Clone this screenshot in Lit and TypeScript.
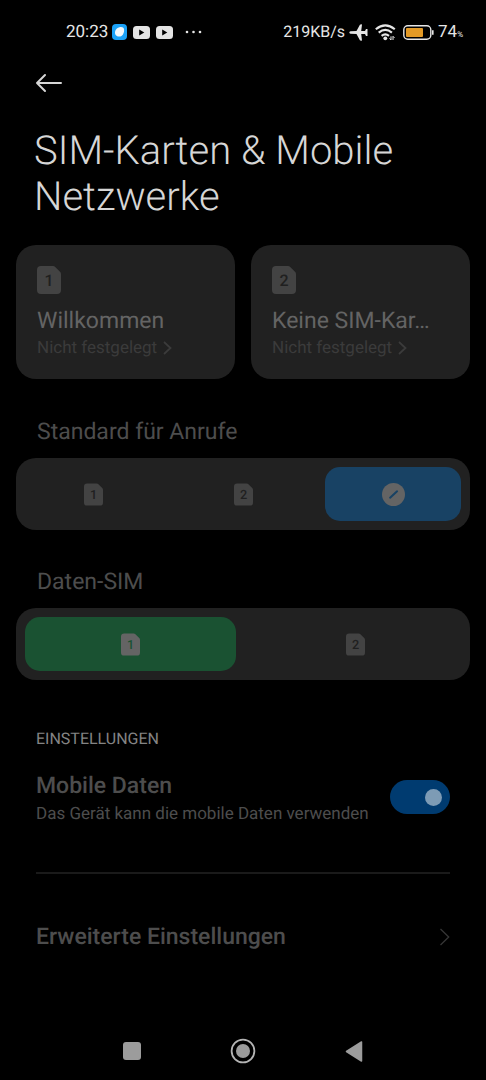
import { LitElement, html, css } from "lit";
import { customElement, property, state } from "lit/decorators.js";

/** SIM card glyph with its slot number, sized by the parent. */
@customElement("sim-icon")
class SimIcon extends LitElement {
  @property() slot_no = "1";

  static styles = css`
    :host { display: block; width: 24px; height: 28px; color: #434343; --digit: #202020; }
    .glyph { display: block; width: 100%; height: 100%; }
    .digit { fill: var(--digit); font: 500 16px Roboto, sans-serif; text-anchor: middle; }
  `;

  render() {
    return html`<svg class="glyph" viewBox="0 0 24 28" aria-hidden="true">
      <path fill="currentColor" d="M4 0H16Q17.300 0 18.200 .9L23 5.800Q24 6.800 24 8.200V24Q24 28 20 28H4Q0 28 0 24V4Q0 0 4 0Z"/>
      <text class="digit" x="12" y="20">${this.slot_no}</text>
    </svg>`;
  }
}

type Choice = { id: string; label: string };

/** Row of mutually exclusive SIM choices. */
@customElement("sim-choice")
class SimChoice extends LitElement {
  @property() name = "";
  @property() legend = "";
  @property() value = "";
  @property() tone = "blue";
  @property({ attribute: false }) choices: Choice[] = [];

  static styles = css`
    :host { display: block; }
    .group { margin: 0; padding: 0; border: 0; min-width: 0; }
    .legend { display: block; padding: 0 21px; margin-bottom: 11px; font-size: 23px; line-height: 30px; color: #4d4d4d; }
    .track { display: grid; grid-auto-flow: column; grid-auto-columns: 1fr; gap: 14px; padding: 9px; border-radius: 20px; background: #212121; }
    .option { display: grid; place-items: center; height: 54px; border-radius: 15px; cursor: pointer; }
    .option > * { grid-area: 1 / 1; }
    .radio { appearance: none; margin: 0; width: 100%; height: 100%; border-radius: 15px; outline-offset: 2px; }
    .blue .radio:checked { background: #184264; }
    .green .radio:checked { background: #1a5232; }
    .sim { width: 19px; height: 23px; }
    .radio:checked + .sim { color: #646464; --digit: #1a5232; }
    .none { display: block; width: 23px; height: 23px; color: #434343; --slash: #212121; }
    .radio:checked + .none { color: #646464; --slash: #184264; }
    .slash { stroke: var(--slash); stroke-width: 2; stroke-linecap: round; }
  `;

  render() {
    return html`<fieldset class="group">
      <legend class="legend">${this.legend}</legend>
      <div class="track ${this.tone}">
        ${this.choices.map((c) => html`<label class="option">
          <input class="radio" type="radio" name=${this.name} aria-label=${c.label}
            .checked=${c.id === this.value} @change=${() => (this.value = c.id)} />
          ${c.id === "none"
            ? html`<svg class="none" viewBox="0 0 23 23" aria-hidden="true">
                <circle cx="11.5" cy="11.5" r="11.5" fill="currentColor"/>
                <path class="slash" d="M8.100 14.700L15.100 8.300"/></svg>`
            : html`<sim-icon class="sim" .slot_no=${c.id}></sim-icon>`}
        </label>`)}
      </div>
    </fieldset>`;
  }
}

@customElement("status-bar")
class StatusBar extends LitElement {
  static styles = css`
    :host { display: flex; justify-content: space-between; align-items: center; height: 24px; padding: 20px 23px 0 66px; color: #e6e6e6; font-size: 17px; line-height: 24px; }
    .side, .apps { display: flex; align-items: center; }
    .side { gap: 4px; }
    .apps { gap: 6px; }
    .icon { display: block; flex: none; }
    .more { margin-left: 6px; }
    .rate { font-size: 16px; }
    .level { display: block; }
    .percent { font-size: 8px; line-height: 1; }
    .wifi { margin: 0 3px; }
  `;

  private video() {
    return html`<svg class="icon" width="17" height="13" viewBox="0 0 17 13" aria-hidden="true">
      <rect width="17" height="13" rx="3.5" fill="#e4e4e4"/><path d="M6.200 3.500L11.300 6.500L6.200 9.500Z" fill="#000"/></svg>`;
  }

  render() {
    return html`
      <div class="side">
        <span>20:23</span>
        <div class="apps">
          <svg class="icon" width="15" height="16" viewBox="0 0 15 16" aria-hidden="true">
            <rect width="15" height="16" rx="4" fill="#1ba2f8"/>
            <path fill="#f2f8fc" d="M7.500 3.200C9.500 2.500 11.800 3.200 12 5C12.300 7 12 9 10.800 10.700C9.400 12.600 6.800 13 4.800 12C3 11.100 2.700 9 3.200 7C3.800 4.900 5.600 3.800 7.500 3.200Z"/>
          </svg>
          ${this.video()}${this.video()}
          <svg class="icon more" width="17" height="4" viewBox="0 0 17 4" fill="#e6e6e6" aria-hidden="true">
            <circle cx="2" cy="2" r="1.300"/><circle cx="8.500" cy="2" r="1.300"/><circle cx="15" cy="2" r="1.300"/></svg>
        </div>
      </div>
      <div class="side">
        <span class="rate">219KB/s</span>
        <svg class="icon" width="19" height="17" viewBox="0 0 19 17" aria-hidden="true">
          <path fill="#e6e6e6" d="M1.500 7.200L7.500 7L10.900 .8Q11.200 .2 13 .4L12.200 6.900L16 7L17 4.900H18.500V12.100H17L16 10L12.200 10.100L13 16.600Q11.200 16.800 10.900 16.200L7.500 10L1.500 9.800Q.3 9.500 .3 8.500T1.500 7.200Z"/></svg>
        <svg class="icon wifi" width="21" height="17" viewBox="0 0 21 17" fill="none" stroke="#e6e6e6" stroke-width="2.100" aria-hidden="true">
          <path d="M.8 5.200Q10.300-2.600 19.800 5.200"/><path d="M3.700 8.600Q10.300 3.100 16.900 8.600"/><path d="M6.600 11.900Q10.300 8.900 14 11.900"/>
          <circle cx="10.300" cy="14.300" r="1.900" fill="#e6e6e6" stroke="none"/>
          <path stroke-width="1" d="M16 12.300V16L14.600 14.400M18 16V12.300L19.500 13.900"/></svg>
        <svg class="icon" width="31" height="15" viewBox="0 0 31 15" aria-hidden="true">
          <rect x=".8" y=".8" width="27" height="13.400" rx="4" fill="none" stroke="#e6e6e6" stroke-width="1.400"/>
          <rect x="3" y="3" width="17" height="9" rx="1" fill="#e39a26"/>
          <path d="M29.800 5.300V9.700" stroke="#e6e6e6" stroke-width="1.600"/></svg>
        <span class="level">74<span class="percent">%</span></span>
      </div>`;
  }
}

@customElement("app-root")
class AppRoot extends LitElement {
  @state() private mobileData = true;

  private sims = [
    { id: "1", name: "Willkommen" },
    { id: "2", name: "Keine SIM-Kar…" },
  ];

  static styles = css`
    :host { display: flex; flex-direction: column; min-height: 100vh; background: #000; color: #4d4d4d; font-family: Roboto, sans-serif; text-rendering: geometricPrecision; }
    .back { display: block; margin: 28px 0 0 35px; padding: 0; border: 0; background: none; width: 28px; height: 22px; cursor: pointer; }
    .icon { display: block; flex: none; }
    .title { margin: 34px 34px 0; font-size: 40px; line-height: 46px; font-weight: 300; color: #d6d6d6; }
    .panels { display: flex; flex-direction: column; padding: 25px 16px 0; }
    .cards { display: grid; grid-template-columns: 1fr 1fr; gap: 16px; margin-bottom: 38px; }
    .card { display: flex; flex-direction: column; align-items: flex-start; min-width: 0; padding: 21px 21px 19px; border: 0; border-radius: 20px; background: #212121; font-family: inherit; text-rendering: inherit; text-align: left; cursor: pointer; }
    .name { max-width: 100%; margin-top: 12px; overflow: hidden; white-space: nowrap; text-overflow: ellipsis; font-size: 23px; line-height: 30px; color: #646464; }
    .state { display: flex; align-items: center; gap: 6px; font-size: 17px; line-height: 24px; color: #3b3b3b; }
    .calls { margin-bottom: 37px; }
    .settings { padding: 0 36px; }
    .section { margin: 48px 0 0; font-size: 16px; line-height: 22px; font-weight: 400; color: #848484; }
    .row { display: flex; align-items: center; justify-content: space-between; gap: 16px; color: #4d4d4d; text-decoration: none; }
    .data { align-items: flex-start; padding: 21px 0 45px; border-bottom: 2px solid #1a1a1a; }
    .copy { display: flex; flex-direction: column; }
    .label { font-size: 23px; line-height: 30px; font-weight: 500; }
    .hint { font-size: 17px; line-height: 26px; }
    .switch { appearance: none; flex: none; display: flex; align-items: center; box-sizing: border-box; width: 60px; height: 34px; margin: 9px 0 0; padding: 0 8px; border-radius: 17px; background: #222; cursor: pointer; }
    .switch::before { content: ""; width: 17px; height: 17px; border-radius: 50%; background: #7d9bb5; }
    .switch:checked { justify-content: flex-end; background: #003b70; }
    .more { padding: 48px 0; }
    .nav { display: grid; grid-template-columns: repeat(3, 111px); justify-content: center; margin-top: auto; padding-bottom: 16px; }
    .key { display: grid; place-items: center; padding: 0; border: 0; background: none; height: 26px; cursor: pointer; }
  `;

  render() {
    return html`
      <status-bar></status-bar>
      <button class="back" aria-label="Zurück">
        <svg class="icon" width="28" height="22" viewBox="0 0 28 22" fill="none" stroke="#d6d6d6" stroke-width="2" stroke-linecap="round" stroke-linejoin="round">
          <path d="M26 11H2M10 3L2 11L10 19"/></svg>
      </button>
      <h1 class="title">SIM-Karten &amp; Mobile Netzwerke</h1>

      <div class="panels">
        <div class="cards">
          ${this.sims.map((s) => html`<button class="card">
            <sim-icon .slot_no=${s.id}></sim-icon>
            <span class="name">${s.name}</span>
            <span class="state">Nicht festgelegt
              <svg class="icon" width="9" height="14" viewBox="0 0 9 14" fill="none" stroke="currentColor" stroke-width="1.800" aria-hidden="true"><path d="M1 1L7.500 7L1 13"/></svg>
            </span>
          </button>`)}
        </div>
        <sim-choice class="calls" name="calls" legend="Standard für Anrufe" value="none" tone="blue"
          .choices=${[{ id: "1", label: "SIM 1" }, { id: "2", label: "SIM 2" }, { id: "none", label: "Keine" }]}></sim-choice>
        <sim-choice name="data" legend="Daten-SIM" value="1" tone="green"
          .choices=${[{ id: "1", label: "SIM 1" }, { id: "2", label: "SIM 2" }]}></sim-choice>
      </div>

      <div class="settings">
        <h2 class="section">EINSTELLUNGEN</h2>
        <div class="row data">
          <label class="copy" for="mobile-data">
            <span class="label">Mobile Daten</span>
            <span class="hint">Das Gerät kann die mobile Daten verwenden</span>
          </label>
          <input class="switch" id="mobile-data" type="checkbox" role="switch" .checked=${this.mobileData}
            @change=${(e: Event) => (this.mobileData = (e.target as HTMLInputElement).checked)} />
        </div>
        <a class="row more" href="#advanced">
          <span class="label">Erweiterte Einstellungen</span>
          <svg class="icon" width="11" height="18" viewBox="0 0 11 18" fill="none" stroke="#363636" stroke-width="1.300" aria-hidden="true"><path d="M1.500 1L9.700 9L1.500 17"/></svg>
        </a>
      </div>

      <nav class="nav">
        <button class="key" aria-label="Letzte Apps">
          <svg class="icon" width="18" height="18" viewBox="0 0 18 18"><rect width="18" height="18" rx="3" fill="#9c9c9c"/></svg>
        </button>
        <button class="key" aria-label="Startseite">
          <svg class="icon" width="26" height="26" viewBox="0 0 26 26"><circle cx="13" cy="13" r="11.400" fill="none" stroke="#b4b4b4" stroke-width="1.800"/><circle cx="13" cy="13" r="7" fill="#9c9c9c"/></svg>
        </button>
        <button class="key" aria-label="Zurück">
          <svg class="icon" width="18" height="21" viewBox="0 0 18 21"><path d="M16.500 1V20L1.500 10.500Z" fill="#9c9c9c" stroke="#9c9c9c" stroke-width="1.500" stroke-linejoin="round"/></svg>
        </button>
      </nav>`;
  }
}
